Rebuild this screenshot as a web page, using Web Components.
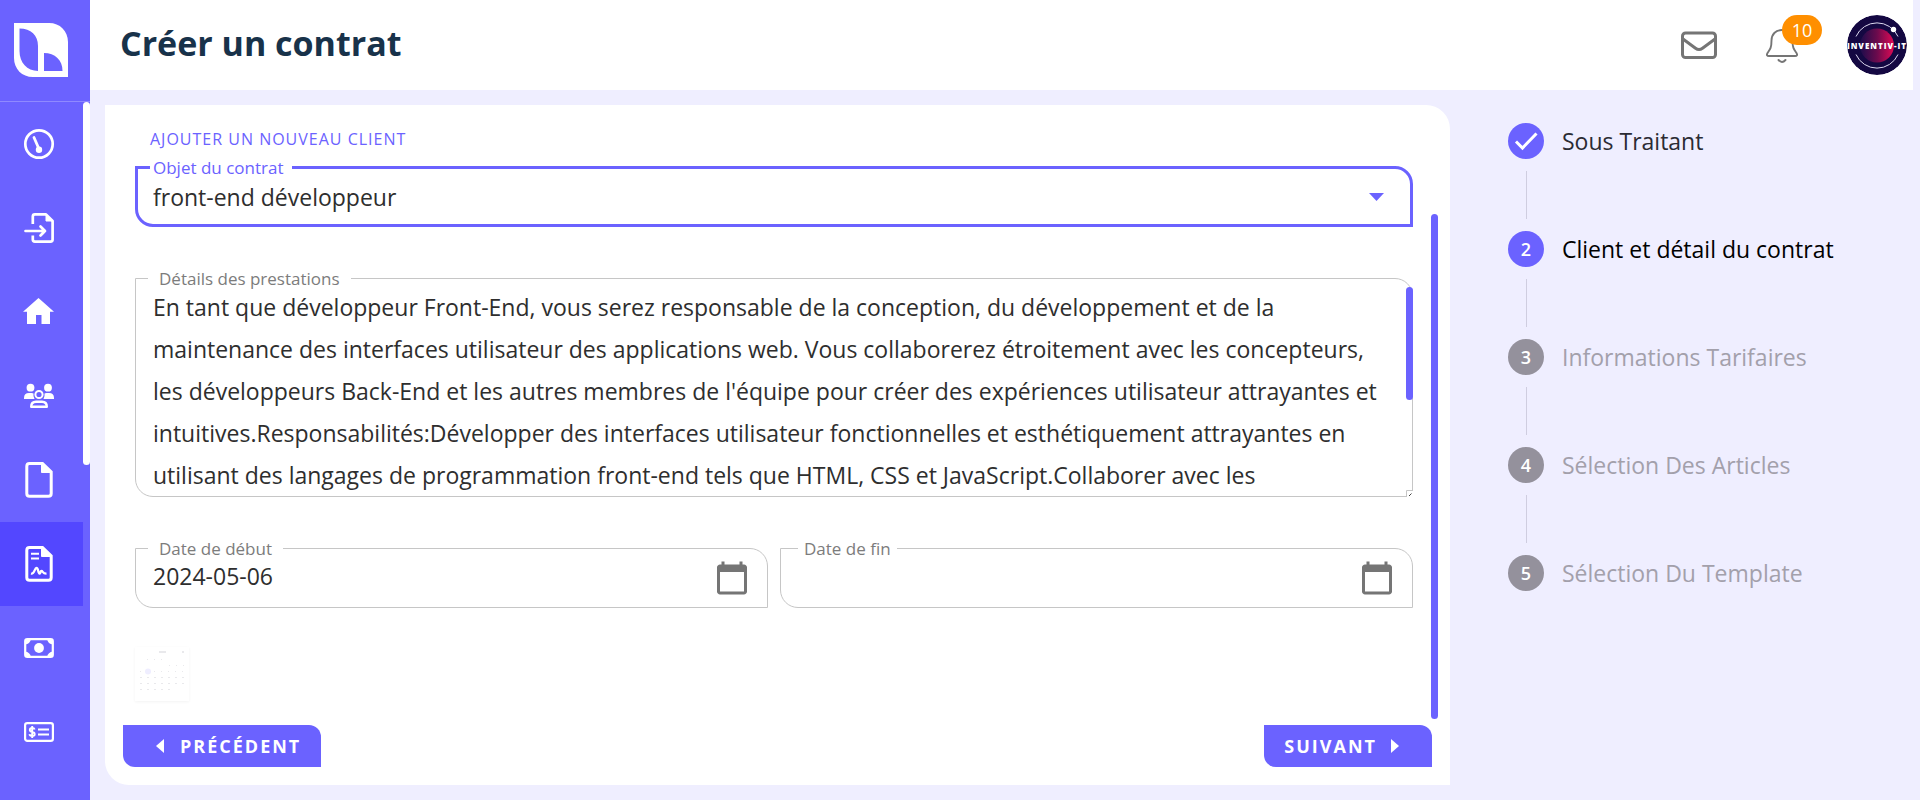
<!DOCTYPE html>
<html lang="fr">
<head>
<meta charset="utf-8">
<meta name="viewport" content="width=device-width, initial-scale=1">
<title>Créer un contrat</title>
<style>
  :root {
    --primary: #6b62ff;
    --primary-dark: #5347ff;
    --surface: #ffffff;
    --page: #efeeff;
    --line: #c6c6c6;
    --text: #2e2e2e;
    --muted: #7c7c7c;
  }
  body {
    margin: 0;
    background: var(--page);
    color: var(--text);
    font-family: "Open Sans", "Noto Sans", sans-serif;
    font-weight: 400;
    font-size: 23px;
  }
</style>
</head>
<body>
<app-shell>
  <side-nav slot="nav"></side-nav>
  <top-bar slot="header" count="10">Créer un contrat</top-bar>
  <contract-form></contract-form>
  <step-list slot="aside">
    <step-item state="done">Sous Traitant</step-item>
    <step-item state="current" number="2">Client et détail du contrat</step-item>
    <step-item number="3">Informations Tarifaires</step-item>
    <step-item number="4">Sélection Des Articles</step-item>
    <step-item number="5">Sélection Du Template</step-item>
  </step-list>
</app-shell>

<script>
const define = (name, html, setup) => {
  const template = document.createElement('template');
  template.innerHTML = html;
  customElements.define(name, class extends HTMLElement {
    constructor() {
      super();
      this.attachShadow({ mode: 'open' }).append(template.content.cloneNode(true));
    }
    connectedCallback() { if (setup) setup(this, this.shadowRoot); }
  });
};

/* Page frame: navigation rail, header, content and aside */
define('app-shell', `
<style>
  :host { display: grid; grid-template-columns: 90px minmax(0, 1fr); height: 100vh; min-height: 600px; overflow: hidden; }
  .page { display: flex; flex-direction: column; min-height: 0; }
  main { flex: 1; min-height: 0; display: grid; grid-template-columns: minmax(0, 1fr) 412px; column-gap: 58px; padding: 15px 0 15px 15px; }
</style>
<slot name="nav"></slot>
<div class="page">
  <slot name="header"></slot>
  <main><slot></slot><slot name="aside"></slot></main>
</div>`);

/* Navigation rail */
define('side-nav', `
<style>
  :host { display: flex; flex-direction: column; min-height: 0; background: var(--primary); color: #fff; }
  .logo { display: block; box-sizing: border-box; height: 102px; padding: 23px 14px; border-bottom: 1px solid #8f89ff; }
  svg { display: block; }
  .scroll { display: flex; flex: 1; min-height: 0; overflow: hidden; }
  nav { flex: 1; }
  nav a { display: flex; align-items: center; height: 84px; padding-left: 21px; color: inherit; }
  nav a.active { background: var(--primary-dark); }
  .thumb { width: 7px; height: 363px; border-radius: 4px; background: #fff; }
</style>
<a class="logo" href="#" aria-label="Accueil">
  <svg width="54" height="54" viewBox="0 0 54 54"><path fill="#fff" fill-rule="evenodd" d="M0 0H35C46 0 54 8 54 19V54H19C8 54 0 46 0 35ZM5.500 5.500V28C5.500 39.500 13 48 24 48V23C24 12 17 5.500 5.500 5.500ZM30 30V48H48.500C48.500 37 41 30 30 30Z"/></svg>
</a>
<div class="scroll">
  <nav>
    <a href="#" aria-label="Tableau de bord"><svg width="36" height="36" viewBox="0 0 36 36" fill="none" stroke="#fff" stroke-linecap="round"><circle cx="18" cy="18" r="13.700" stroke-width="2.700"/><path stroke-width="2.800" d="M13 11.500 18 23"/><circle cx="18" cy="23.800" r="3.200" fill="#fff" stroke="none"/></svg></a>
    <a href="#" aria-label="Importer"><svg width="36" height="36" viewBox="0 0 36 36" fill="none" stroke="#fff" stroke-width="2.700" stroke-linecap="round" stroke-linejoin="round"><path d="M11.800 14V6.500Q11.800 4.400 13.900 4.400H25L31.600 11V29.500Q31.600 31.600 29.500 31.600H13.900Q11.800 31.600 11.800 29.500V25.500" stroke-linecap="butt"/><path d="M25 4.500V11H31.500Z" fill="#fff" stroke-width="1"/><path d="M4.500 21H24M19.500 16.500 24 21 19.500 25.500"/></svg></a>
    <a href="#" aria-label="Maison"><svg width="36" height="36" viewBox="0 0 36 36"><path fill="#fff" d="M17.500 4 33 17.700H29V30H20.500V21H15V30H6V17.700H2Z"/></svg></a>
    <a href="#" aria-label="Équipe"><svg width="36" height="36" viewBox="0 0 36 36" fill="#fff"><circle cx="9.500" cy="9.700" r="3.900"/><circle cx="27" cy="9.700" r="3.900"/><path d="M3 21V20Q3 15 8 15H10.500Q12 15 12.500 15.500 12 18.500 13.500 21ZM33 21V20Q33 15 28 15H25.500Q24 15 23.500 15.500 24 18.500 22.500 21Z"/><circle cx="18" cy="16.500" r="3.600" fill="none" stroke="#fff" stroke-width="2"/><path d="M10.200 28.700Q10.200 23.800 15 23.800H21Q25.800 23.800 25.800 28.700Z" fill="none" stroke="#fff" stroke-width="2.400" stroke-linejoin="round"/></svg></a>
    <a href="#" aria-label="Documents"><svg width="36" height="36" viewBox="0 0 36 36" fill="none" stroke="#fff" stroke-width="3"><path d="M8.500 1.500H21.500L30.200 10V31.500Q30.200 34.300 27.400 34.300H8.600Q5.800 34.300 5.800 31.500V4.300Q5.800 1.500 8.500 1.500Z"/><path d="M20.500 1.500V10.500H30Z" fill="#fff" stroke-width="1"/></svg></a>
    <a class="active" href="#" aria-label="Contrats" aria-current="page"><svg width="36" height="36" viewBox="0 0 36 36" fill="none" stroke="#fff" stroke-width="3"><path d="M8.500 1.500H21.500L30.200 10V31.500Q30.200 34.300 27.400 34.300H8.600Q5.800 34.300 5.800 31.500V4.300Q5.800 1.500 8.500 1.500Z"/><path d="M20.500 1.500V10.500H30Z" fill="#fff" stroke-width="1"/><path stroke-width="2" d="M10 7.800H18M10 12.500H18"/><path stroke-width="2.300" d="M10 27.600C13.500 28.500 13.500 22 15.500 22S17 27.500 18.500 27.500 19 25 20.500 25 21.500 27.700 25.500 27.600"/></svg></a>
    <a href="#" aria-label="Paiements"><svg width="36" height="36" viewBox="0 0 36 36" fill="none" stroke="#fff" stroke-width="2.200"><rect x="4.200" y="9.100" width="27.600" height="17.800" rx="2.200"/><path fill="#fff" stroke="none" d="M4 9H10Q9 14 4 14.500ZM32 9H26Q27 14 32 14.500ZM4 27H10Q9 22 4 21.500ZM32 27H26Q27 22 32 21.500Z"/><circle cx="18" cy="18" r="4.900" fill="#fff" stroke="none"/></svg></a>
    <a href="#" aria-label="Factures"><svg width="36" height="36" viewBox="0 0 36 36" fill="none" stroke="#fff" stroke-width="2.200"><rect x="4.100" y="9.100" width="27.800" height="17.800" rx="2.200"/><path stroke-width="2" d="M17 15.500H28M17 20.500H28"/><path stroke-width="1.900" d="M13.700 15.500Q13.200 14 11.200 14 8.800 14 8.800 16 8.800 17.500 11.200 18 13.700 18.500 13.700 20.200 13.700 22 11.200 22 8.800 22 8.500 20.200M11.200 12V24"/></svg></a>
  </nav>
  <div class="thumb"></div>
</div>`);

/* Header with title, messages, notifications and account */
define('top-bar', `
<style>
  :host { display: flex; align-items: center; box-sizing: border-box; height: 90px; margin-right: 7px; padding: 0 6px 0 30px; gap: 47px; background: var(--surface); }
  h1 { flex: 1; margin: 0; padding-bottom: 4px; font-size: 34px; line-height: 48px; font-weight: 700; color: #18324a; }
  button { position: relative; display: block; padding: 0; border: 0; background: none; font: inherit; }
  svg { display: block; }
  .badge { position: absolute; left: 18px; bottom: 18px; width: 40px; border-radius: 15px; background: #ff8f00; color: #fff; font-size: 18px; line-height: 30px; font-weight: 400; text-align: center; }
</style>
<h1><slot></slot></h1>
<button type="button" aria-label="Messages"><svg width="36" height="36" viewBox="0 0 36 36" fill="none" stroke="#757575" stroke-width="3"><rect x="1.500" y="6" width="33" height="24.500" rx="3"/><path d="M2 12 14.500 21.300Q18 23.800 21.500 21.300L34 12"/></svg></button>
<button type="button" aria-label="Notifications"><svg width="36" height="36" viewBox="0 0 36 36" fill="none" stroke="#757575" stroke-width="1.900" stroke-linecap="round"><path d="M18 3C11.500 3 7.500 7.500 7.500 13.500 7.500 21 6 22.500 3.500 26 2.300 28 3 29 5 29H31C33 29 33.700 28 32.500 26 30 22.500 28.500 21 28.500 13.500 28.500 7.500 24.500 3 18 3ZM14.500 33Q18 37 21.500 33"/></svg><span class="badge"></span></button>
<button type="button" aria-label="Compte"><svg width="60" height="60" viewBox="0 0 60 60">
  <defs><linearGradient id="g"><stop offset="0" stop-color="#1c0c4c"/><stop offset=".5" stop-color="#6b0b4d"/><stop offset="1" stop-color="#e00a55"/></linearGradient><clipPath id="c"><circle cx="30" cy="30" r="30"/></clipPath></defs>
  <g clip-path="url(#c)"><circle cx="30" cy="30" r="30" fill="#140842"/><circle cx="30" cy="30.500" r="17" fill="url(#g)"/>
  <path fill="none" stroke="#dcd8ee" stroke-width="1" d="M9 21.500A23 23 0 0 1 51 21.500M9 39.500A23 23 0 0 0 51 39.500"/><circle cx="46.500" cy="14.500" r="2.700" fill="#fff"/>
  <text x="30" y="34" text-anchor="middle" fill="#fff" font-family="Open Sans, sans-serif" font-size="8" font-weight="800" letter-spacing="1">INVENTIV-IT</text></g></svg></button>`,
(host, root) => { root.querySelector('.badge').textContent = host.getAttribute('count'); });

/* Outlined field frame: rounded on two opposite corners, label set in the top edge */
const fieldCss = `
  :host { display: block; position: relative; min-width: 0; }
  .box { display: flex; align-items: center; box-sizing: border-box; height: 60px; padding: 0 17px; border: 1px solid var(--line); border-radius: 0 18px; background: var(--surface); }
  label { position: absolute; top: -11px; left: 13px; padding: 0 11px; background: var(--surface); color: var(--muted); font-size: 17px; line-height: 24px; }
  input, select, textarea { flex: 1; min-width: 0; margin: 0; padding: 0; border: 0; outline: 0; background: none; color: inherit; font: inherit; }
  svg { display: block; }
`;

define('select-field', `
<style>${fieldCss}
  .box { height: 61px; padding: 0 26px 0 15px; border: 3px solid var(--primary); }
  label { top: -10px; left: 15px; padding: 0 8px 0 3px; color: var(--primary); }
  select { appearance: none; height: 48px; }
</style>
<div class="box">
  <select id="f"></select>
  <svg width="15" height="8" viewBox="0 0 15 8"><path fill="#6b62ff" d="M0 0H15L7.500 8Z"/></svg>
</div>
<label for="f"></label>`,
(host, root) => {
  root.querySelector('label').textContent = host.getAttribute('label');
  root.querySelector('select').append(new Option(host.getAttribute('value')));
});

define('text-area-field', `
<style>${fieldCss}
  .box { height: auto; padding: 7px 0 0 17px; align-items: stretch; }
  textarea { display: block; height: 210px; line-height: 42px; resize: none; overflow: hidden; white-space: pre; }
  .thumb { position: absolute; right: 0; top: 9px; width: 7px; height: 113px; border-radius: 4px; background: var(--primary); }
  .grip { position: absolute; right: 0; bottom: 0; background: var(--surface); }
</style>
<div class="box"><textarea id="f" rows="5"></textarea></div>
<label for="f"></label>
<div class="thumb"></div>
<svg class="grip" width="7" height="7" viewBox="0 0 7 7"><path fill="none" stroke="#c6c6c6" d="M.5 7V.5H7"/><path stroke="#444" d="M3 6 5.500 3.500"/></svg>`,
(host, root) => {
  root.querySelector('label').textContent = host.getAttribute('label');
  root.querySelector('textarea').value = host.textContent.trim();
});

define('date-field', `
<style>${fieldCss}
  .box { padding-right: 17px; }
  input { padding-bottom: 4px; }
  button { padding: 0; border: 0; background: none; }
  :host([empty]) label { left: 18px; padding: 0 6px; }
</style>
<div class="box">
  <input id="f" type="text">
  <button type="button" aria-label="Ouvrir le calendrier"><svg width="36" height="36" viewBox="0 0 24 24"><path fill="#757575" d="M20 3h-1V1h-2v2H7V1H5v2H4c-1.100 0-2 .9-2 2v16c0 1.100.9 2 2 2h16c1.100 0 2-.9 2-2V5c0-1.100-.9-2-2-2zm0 18H4V8h16v13z"/></svg></button>
</div>
<label for="f"></label>`,
(host, root) => {
  root.querySelector('label').textContent = host.getAttribute('label');
  root.querySelector('input').value = host.getAttribute('value') || '';
});

/* Calendar popup at the start of its fade-in */
define('calendar-ghost', `
<style>
  :host { display: block; width: 54px; height: 54px; background: var(--surface); box-shadow: 0 1px 3px #0000000d; }
  svg { display: block; }
</style>
<svg width="54" height="54" viewBox="0 0 54 54" fill="none" stroke="#e9e9ec" stroke-width="1">
  <path d="M24 5H31M47 5H49" stroke-width="2"/>
  <path stroke-dasharray="1 6" d="M12 12.500H33M34 18.500H50M5 24.500H50"/>
  <path stroke-dasharray="2 5" d="M5 30.500H50M5 36.500H50M5 42.500H36"/>
  <circle cx="13" cy="24.500" r="3" fill="#efeeff" stroke="none"/>
</svg>`);

define('nav-button', `
<style>
  :host { display: block; }
  button { display: flex; align-items: center; gap: 16px; height: 42px; padding: 0 20px 0 33px; border: 0; border-radius: 0 12px; background: var(--primary); color: #fff; font: inherit; font-size: 18px; font-weight: 700; letter-spacing: 2px; }
  :host([forward]) button { flex-direction: row-reverse; gap: 14px; padding: 0 33px 0 20px; }
  :host([forward]) svg { transform: rotate(180deg); }
</style>
<button type="button"><svg width="8" height="14" viewBox="0 0 8 14"><path fill="#fff" d="M8 0V14L0 7Z"/></svg><slot></slot></button>`);

define('contract-form', `
<style>
  :host { display: flex; flex-direction: column; min-height: 0; border-radius: 0 24px; background: var(--surface); }
  .scroll { flex: 1; min-height: 0; display: flex; }
  form { flex: 1; min-width: 0; display: flex; flex-direction: column; align-items: stretch; padding: 19px 18px 0 30px; }
  .add { align-self: flex-start; height: 30px; margin: 0 0 12px 15px; padding: 0; border: 0; background: none; color: var(--primary); font: inherit; font-size: 16px; letter-spacing: 1px; }
  .fields { display: grid; gap: 51px; }
  .dates { display: grid; grid-template-columns: 1fr 1fr; gap: 12px; }
  calendar-ghost { margin-top: 39px; }
  .thumb { width: 7px; margin: 109px 12px 0 0; border-radius: 4px; background: var(--primary); }
  footer { display: flex; justify-content: space-between; padding: 6px 18px 18px; }
</style>
<div class="scroll">
  <form>
    <button class="add" type="button">AJOUTER UN NOUVEAU CLIENT</button>
    <div class="fields">
      <select-field label="Objet du contrat" value="front-end développeur"></select-field>
      <text-area-field label="Détails des prestations">En tant que développeur Front-End, vous serez responsable de la conception, du développement et de la
maintenance des interfaces utilisateur des applications web. Vous collaborerez étroitement avec les concepteurs,
les développeurs Back-End et les autres membres de l'équipe pour créer des expériences utilisateur attrayantes et
intuitives.Responsabilités:Développer des interfaces utilisateur fonctionnelles et esthétiquement attrayantes en
utilisant des langages de programmation front-end tels que HTML, CSS et JavaScript.Collaborer avec les</text-area-field>
      <div class="dates">
        <date-field label="Date de début" value="2024-05-06"></date-field>
        <date-field label="Date de fin" empty></date-field>
      </div>
    </div>
    <calendar-ghost></calendar-ghost>
  </form>
  <div class="thumb"></div>
</div>
<footer>
  <nav-button>PRÉCÉDENT</nav-button>
  <nav-button forward>SUIVANT</nav-button>
</footer>`);

/* Vertical progress list */
define('step-list', `
<style>:host { display: block; padding-top: 18px; }</style>
<div role="list"><slot></slot></div>`,
host => host.querySelectorAll('step-item').forEach(item => item.setAttribute('role', 'listitem')));

define('step-item', `
<style>
  :host { display: block; color: #a3a0ab; }
  :host([state=done]) { color: #2b2b33; }
  :host([state=current]) { color: #000; }
  .row { display: flex; align-items: center; gap: 18px; height: 36px; line-height: 36px; white-space: nowrap; }
  .dot { display: grid; place-items: center; width: 36px; height: 36px; border-radius: 50%; background: #94919c; color: #fff; font-size: 18px; font-weight: 600; }
  :host([state]) .dot { background: var(--primary); }
  .line { width: 1px; height: 48px; margin: 12px 0 12px 18px; background: #cfcde0; }
  :host(:last-child) .line { display: none; }
</style>
<div class="row"><span class="dot"></span><span><slot></slot></span></div>
<div class="line"></div>`,
(host, root) => {
  const dot = root.querySelector('.dot');
  if (host.getAttribute('state') === 'done') {
    dot.innerHTML = '<svg width="24" height="24" viewBox="0 0 24 24" fill="none" stroke="#fff" stroke-width="3"><path d="M2 12.500 8.500 19 22.500 4.500"/></svg>';
  } else {
    dot.textContent = host.getAttribute('number');
  }
});
</script>
</body>
</html>
